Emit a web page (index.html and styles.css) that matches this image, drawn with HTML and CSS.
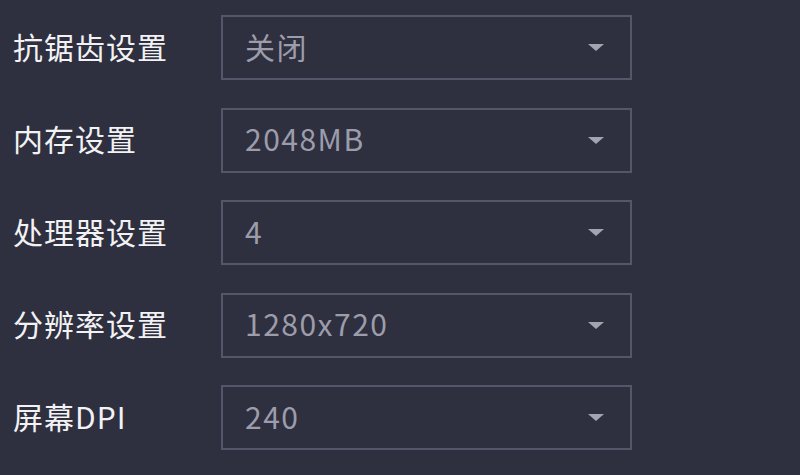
FILE: index.html
```html
<!DOCTYPE html>
<html lang="zh-CN">
<head>
<meta charset="UTF-8">
<title>设置</title>
<link rel="stylesheet" href="styles.css">
</head>
<body>
<div class="settings">
  <div class="row">
    <span class="label">抗锯齿设置</span>
    <div class="select"><span class="value">关闭</span><span class="arrow"></span></div>
  </div>
  <div class="row">
    <span class="label">内存设置</span>
    <div class="select"><span class="value">2048MB</span><span class="arrow"></span></div>
  </div>
  <div class="row">
    <span class="label">处理器设置</span>
    <div class="select"><span class="value">4</span><span class="arrow"></span></div>
  </div>
  <div class="row">
    <span class="label">分辨率设置</span>
    <div class="select"><span class="value">1280x720</span><span class="arrow"></span></div>
  </div>
  <div class="row">
    <span class="label">屏幕DPI</span>
    <div class="select"><span class="value">240</span><span class="arrow"></span></div>
  </div>
</div>
</body>
</html>
```

FILE: styles.css
```css
body {
  margin: 0;
  background-color: #2e2f3f;
  font-family: "Noto Sans CJK SC", "Noto Sans", sans-serif;
  height: 475px;
  overflow: hidden;
}
.settings {
  padding: 15px 0 0 13px;
}
.row {
  display: flex;
  align-items: center;
  height: 65px;
  margin-bottom: 27.5px;
}
.label {
  width: 208px;
  margin-bottom: 4px;
  color: #f2f2f4;
  font-size: 30px;
  letter-spacing: 1px;
}
.select {
  display: flex;
  align-items: center;
  justify-content: space-between;
  box-sizing: border-box;
  width: 411px;
  height: 65px;
  border: 2px solid #55566a;
  padding: 0 26px 0 22px;
}
.value {
  margin-bottom: 4px;
  color: #9c9caa;
  font-size: 30px;
  letter-spacing: 1.5px;
}
.arrow {
  width: 0;
  height: 0;
  border-left: 8px solid transparent;
  border-right: 8px solid transparent;
  border-top: 7px solid #a4a4b0;
}
```
